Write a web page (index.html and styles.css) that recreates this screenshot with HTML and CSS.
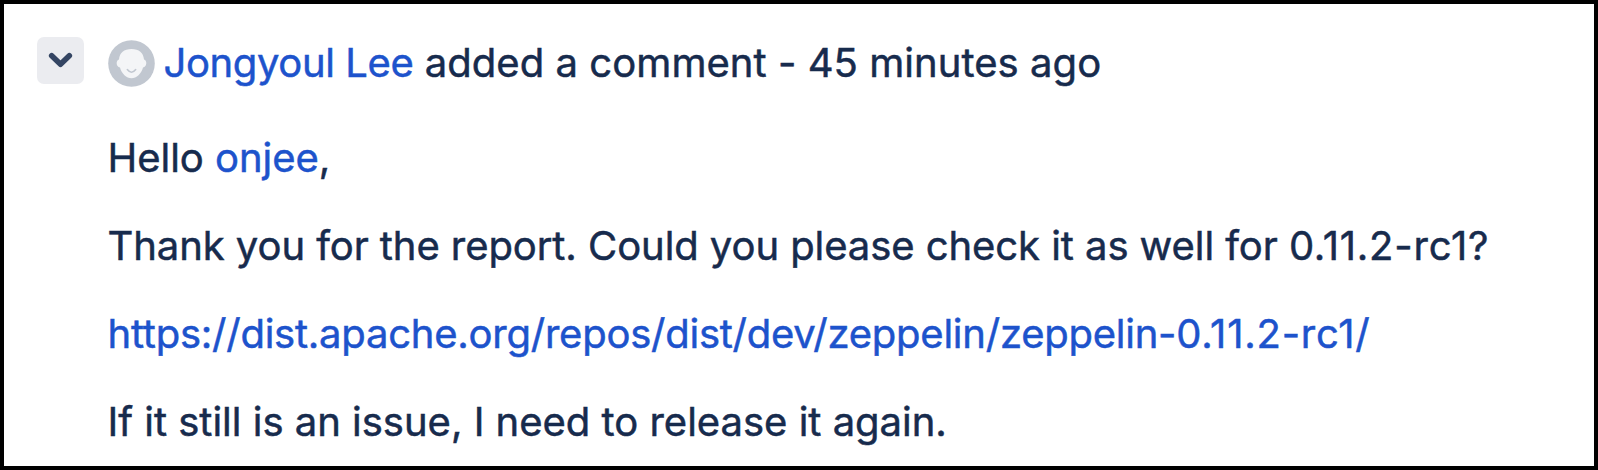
FILE: index.html
```html
<!DOCTYPE html>
<html lang="en"><head><meta charset="utf-8"><title>Comment</title><link rel="stylesheet" href="styles.css"></head>
<body><article class="comment">
<header class="head">
<button class="toggle" aria-label="Collapse"><svg width="47" height="47" viewBox="0 0 47 47"><path d="M14.700 18.700l8.800 8.500 8.800-8.500" fill="none" stroke="#344563" stroke-width="5.600" stroke-linecap="round" stroke-linejoin="round"/></svg></button>
<svg class="avatar" width="47" height="47" viewBox="0 0 47 47"><circle cx="23.500" cy="23.500" r="23.300" fill="#c1c7d0"/><path d="M23.500 9C16 9 11.500 13 11 19.500C7.800 20 7.800 27 12 27.500C13.500 33.500 18.500 38.300 23.500 38.300S33.500 33.500 35 27.500C39.200 27 39.200 20 36 19.500C35.500 13 31 9 23.500 9Z" fill="#f4f5f7"/><path d="M19.300 29.500q4.200 5.500 8.400 0" fill="none" stroke="#c1c7d0" stroke-width="1.500" stroke-linecap="round"/></svg>
<p class="line title"><a>Jongyoul Lee</a> added a comment - 45 minutes ago</p>
</header>
<div class="body">
<p class="line hello">Hello <a>onjee</a>,</p>
<p class="line ask">Thank you for the report. Could you please check it as well for <span class="version">0.11.2-rc1?</span></p>
<p class="line url"><a>https://dist.apache.org/repos/dist/dev/zeppelin/zeppelin-<span class="version">0.11.2-rc1/</span></a></p>
<p class="line last">If it still is an issue, I need to release it again.</p>
</div></article></body></html>
```
FILE: styles.css
```css
*{box-sizing:border-box}
body{margin:0;background:#fff}
.comment{width:1598px;height:470px;border:4px solid #000;padding:33px 0 0 33px;font:40px/60px Inter,sans-serif;color:#172b4d;overflow:hidden;-webkit-text-stroke:.5px currentColor}
.head{display:flex;height:52px}
.toggle{width:47px;height:47px;border:0;border-radius:7px;padding:0;background:#ebecf0}
.toggle svg{display:block}
.avatar{margin:3px 9px 0 23.5px}
.line{margin:0;white-space:nowrap;height:60px}
.title{margin-top:-4px;letter-spacing:.05px}
.title a{letter-spacing:-.38px}
.line a{color:#1d53cc}
.body{padding:39px 0 0 70.5px;display:flex;flex-direction:column;gap:28px}
.hello{letter-spacing:-.03px}
.ask{letter-spacing:-.07px}
.url{letter-spacing:-.24px}
.last{letter-spacing:-.01px}
.version{letter-spacing:.78px}
```
